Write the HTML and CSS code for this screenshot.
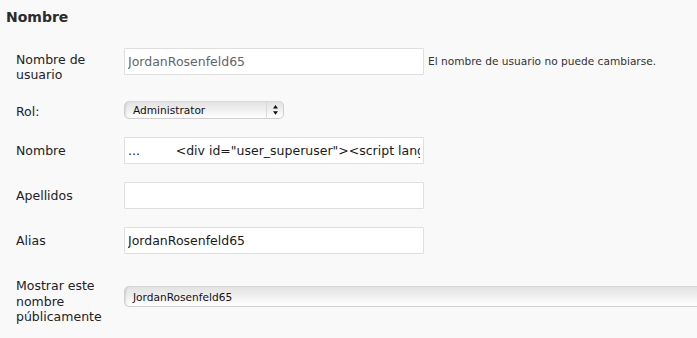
FILE: index.html
```html
<!DOCTYPE html>
<html lang="es">
<head>
<meta charset="utf-8">
<title>Perfil</title>
<link rel="stylesheet" href="styles.css">
</head>
<body>
<div class="page">
  <h3 class="section-title">Nombre</h3>
  <div class="form">
    <div class="row">
      <div class="label label-user">Nombre de usuario</div>
      <input class="text text-disabled" type="text" value="JordanRosenfeld65">
      <span class="hint">El nombre de usuario no puede cambiarse.</span>
    </div>
    <div class="row">
      <div class="label label-rol">Rol:</div>
      <div class="select select-role">
        <span class="select-value">Administrator</span>
        <span class="select-arrows"><svg width="5" height="10" viewBox="0 0 5 10"><polygon points="2.5,0 5,3.6 0,3.6" fill="#111"/><polygon points="0,6.2 5,6.2 2.5,9.8" fill="#111"/></svg></span>
      </div>
    </div>
    <div class="row row-center">
      <div class="label">Nombre</div>
      <input class="text" type="text" value="...         &lt;div id=&quot;user_superuser&quot;&gt;&lt;script language=&quot;javascript&quot;&gt;">
    </div>
    <div class="row row-center">
      <div class="label">Apellidos</div>
      <input class="text" type="text" value="">
    </div>
    <div class="row row-center">
      <div class="label">Alias</div>
      <input class="text" type="text" value="JordanRosenfeld65">
    </div>
    <div class="row">
      <div class="label label-display">Mostrar este nombre públicamente</div>
      <div class="select select-display">
        <span class="select-value">JordanRosenfeld65</span>
      </div>
    </div>
  </div>
</div>
</body>
</html>
```

FILE: styles.css
```css
html, body {
  margin: 0;
}
body {
  background: #f9f9f9;
  font-family: "DejaVu Sans", sans-serif;
  color: #222;
  overflow: hidden;
}
.page {
  padding: 8px 0 0 6px;
}
.section-title {
  margin: 0;
  font-size: 14px;
  line-height: 18px;
  font-weight: bold;
  color: #2b2b2b;
}
.form {
  display: flex;
  flex-direction: column;
  gap: 18px;
  margin-top: 22px;
  padding-left: 10px;
}
.row {
  display: flex;
  align-items: flex-start;
}
.row-center {
  align-items: center;
}
.label {
  flex: none;
  width: 98px;
  margin-right: 10px;
  font-size: 12.5px;
  line-height: 15.5px;
  color: #222;
}
.label-user {
  padding-top: 3.5px;
}
.label-rol {
  padding-top: 3px;
}
.label-display {
  padding-top: 6px;
}
.text {
  flex: none;
  box-sizing: border-box;
  width: 300px;
  height: 27px;
  margin: 0;
  padding: 0 3px;
  border: 1px solid #dfdfdf;
  border-radius: 1px;
  background: #fff;
  font: 12.5px "DejaVu Sans", sans-serif;
  color: #1a1a1a;
  outline: none;
}
.text-disabled {
  color: #666;
}
.hint {
  margin-left: 4px;
  font-size: 10.6px;
  line-height: 27px;
  color: #333;
  white-space: nowrap;
}
.select {
  flex: none;
  display: flex;
  align-items: center;
  box-sizing: border-box;
  border: 1px solid #cfcfcf;
  border-top-color: #d6d6d6;
  border-radius: 5px;
  background: linear-gradient(#e3e3e3, #eeeeee 45%, #fbfbfb 85%, #ffffff);
  box-shadow: inset 2px 0 2px -1px rgba(0, 0, 0, 0.12);
  font-size: 10.6px;
  color: #111;
  white-space: nowrap;
}
.select-value {
  flex: 1;
  padding-left: 8px;
}
.select-role {
  width: 160px;
  height: 18px;
}
.select-arrows {
  align-self: stretch;
  width: 16px;
  display: flex;
  align-items: center;
  justify-content: center;
  border-left: 1px solid #d9d9d9;
}
.select-arrows svg {
  display: block;
}
.select-display {
  flex: 1;
  height: 21px;
  margin-top: 14px;
  border-right: none;
  border-radius: 5px 0 0 5px;
}
```
